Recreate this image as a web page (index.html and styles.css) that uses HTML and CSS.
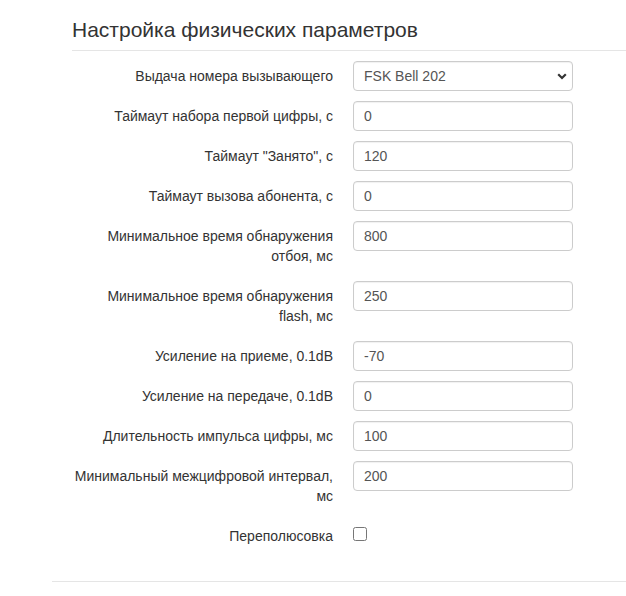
FILE: index.html
```html
<!DOCTYPE html>
<html lang="ru">
<head>
<meta charset="utf-8">
<link rel="stylesheet" href="styles.css">
</head>
<body>
<div class="page">
  <div class="panel-head">
    <h3 class="title">Настройка физических параметров</h3>
  </div>
  <form class="form">
    <div class="row">
      <label class="lbl">Выдача номера вызывающего</label>
      <div class="field select-wrap">
        <select class="ctl sel"><option>FSK Bell 202</option></select>
        <svg class="chev" width="10" height="7" viewBox="0 0 10 7"><path d="M1.2 1.2 L5 5 L8.8 1.2" fill="none" stroke="#333" stroke-width="2.2"/></svg>
      </div>
    </div>
    <div class="row">
      <label class="lbl">Таймаут набора первой цифры, с</label>
      <div class="field"><input class="ctl" value="0"></div>
    </div>
    <div class="row">
      <label class="lbl">Таймаут "Занято", с</label>
      <div class="field"><input class="ctl" value="120"></div>
    </div>
    <div class="row">
      <label class="lbl">Таймаут вызова абонента, с</label>
      <div class="field"><input class="ctl" value="0"></div>
    </div>
    <div class="row">
      <label class="lbl">Минимальное время обнаружения отбоя, мс</label>
      <div class="field"><input class="ctl" value="800"></div>
    </div>
    <div class="row">
      <label class="lbl">Минимальное время обнаружения flash, мс</label>
      <div class="field"><input class="ctl" value="250"></div>
    </div>
    <div class="row">
      <label class="lbl">Усиление на приеме, 0.1dB</label>
      <div class="field"><input class="ctl" value="-70"></div>
    </div>
    <div class="row">
      <label class="lbl">Усиление на передаче, 0.1dB</label>
      <div class="field"><input class="ctl" value="0"></div>
    </div>
    <div class="row">
      <label class="lbl">Длительность импульса цифры, мс</label>
      <div class="field"><input class="ctl" value="100"></div>
    </div>
    <div class="row">
      <label class="lbl">Минимальный межцифровой интервал, мс</label>
      <div class="field"><input class="ctl" value="200"></div>
    </div>
    <div class="row">
      <label class="lbl">Переполюсовка</label>
      <div class="field check"><input type="checkbox" class="cb"></div>
    </div>
  </form>
  <div class="foot-line"></div>
</div>
</body>
</html>
```

FILE: styles.css
```css
html, body {
  margin: 0;
  padding: 0;
  background: #fff;
}
body {
  font-family: "Liberation Sans", Arial, sans-serif;
  font-size: 14px;
  line-height: 20px;
  color: #333;
}
.page {
  padding-left: 52px;
  padding-top: 19px;
}
.panel-head {
  margin-left: 20px;
  border-bottom: 1px solid #e5e5e5;
  padding-bottom: 9px;
}
.title {
  margin: 0;
  font-size: 21px;
  line-height: 22px;
  font-weight: normal;
  color: #333;
}
.form {
  margin-top: 10px;
  padding-bottom: 5px;
}
.row {
  display: grid;
  grid-template-columns: 281px 220px;
  column-gap: 20px;
  margin-bottom: 10px;
}
.lbl {
  text-align: right;
  padding-top: 5px;
  padding-bottom: 5px;
  padding-left: 21px;
}
.field {
  position: relative;
  height: 30px;
}
.ctl {
  box-sizing: border-box;
  width: 220px;
  height: 30px;
  margin: 0;
  padding: 4px 10px;
  border: 1px solid #ccc;
  border-radius: 4px;
  font-family: "Liberation Sans", Arial, sans-serif;
  font-size: 14px;
  color: #555;
  background: #fff;
  box-shadow: inset 0 1px 1px rgba(0,0,0,0.06);
  outline: none;
}
.sel {
  -webkit-appearance: none;
  appearance: none;
  padding-left: 10px;
}
.chev {
  position: absolute;
  left: 204px;
  top: 12px;
  pointer-events: none;
}
.check {
  padding-top: 5px;
}
.cb {
  width: 14px;
  height: 14px;
  margin: 0;
  margin-top: 1px;
}
.foot-line {
  border-top: 1px solid #e5e5e5;
  margin-top: 10px;
}
```
